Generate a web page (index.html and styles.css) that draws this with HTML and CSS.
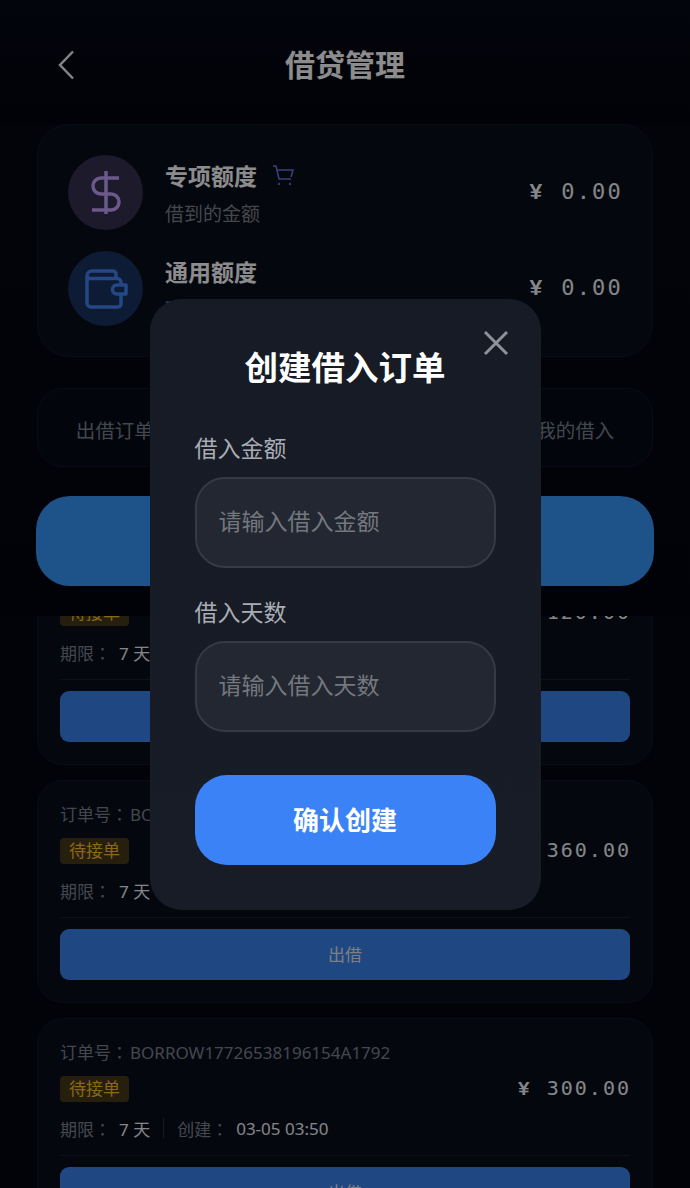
FILE: index.html

```html
<!DOCTYPE html>
<html>
<head>
    <meta charset="UTF-8">
    <meta name="viewport" content="width=device-width, initial-scale=1.0">
    <title>借贷管理</title>
    <link rel="stylesheet" href="styles.css">
</head>
<body>
    <div class="page">
        <div class="header">
            <svg class="back" width="18" height="30" viewBox="0 0 18 30"><path d="M16 1.5 3 15l13 13.5"/></svg>
            <h1>借贷管理</h1>
        </div>

        <div class="top">
            <div class="summary">
                <div class="quota">
                    <div class="quota-icon purple">
                        <svg width="50" height="50" viewBox="0 0 50 50"><path d="M25 3v43M38 10H20a8 8 0 0 0 0 16h10a8 8 0 0 1 0 16H11"/></svg>
                    </div>
                    <div class="quota-text">
                        <div class="quota-title">专项额度
                            <svg class="cart" width="22" height="22" viewBox="0 0 22 22"><path d="M1 2h3l3 13h12M5 6h16l-2 7"/><circle cx="7" cy="20" r=".8"/><circle cx="18" cy="20" r=".8"/></svg>
                        </div>
                        <div class="quota-sub">借到的金额</div>
                    </div>
                    <div class="quota-amount"><span class="yen">¥</span> 0.00</div>
                </div>
                <div class="quota">
                    <div class="quota-icon blue">
                        <svg width="50" height="50" viewBox="0 0 50 50"><path d="M6 12v27a4 4 0 0 0 4 4h27a3 3 0 0 0 3-3V30M6 12a5 5 0 0 1 5-5h21a3 3 0 0 1 3 3v4.500M6 12a3 3 0 0 0 3 2.500h27a4 4 0 0 1 4 4V21M45 21h-9a4.500 4.500 0 0 0 0 9h9z"/></svg>
                    </div>
                    <div class="quota-text">
                        <div class="quota-title">通用额度</div>
                        <div class="quota-sub">可用的金额</div>
                    </div>
                    <div class="quota-amount"><span class="yen">¥</span> 0.00</div>
                </div>
            </div>

            <div class="tabs">
                <div class="tab">出借订单</div>
                <div class="tab">借入订单</div>
                <div class="tab">我的出借</div>
                <div class="tab">我的借入</div>
            </div>

            <button class="create">创建借入订单</button>
        </div>

        <div class="list">
            <div class="order">
                <div class="order-main">
                    <div class="order-info">
                        <div class="order-no"><span class="no-label">订单号：</span>BORROW17726539204417B2260</div>
                        <span class="badge">待接单</span>
                        <div class="order-meta">
                            <span class="meta-label">期限：</span><span class="meta-value">7 天</span>
                            <span class="meta-sep"></span>
                            <span class="meta-label">创建：</span><span class="meta-value">03-05 04:10</span>
                        </div>
                    </div>
                    <div class="order-amount"><span class="yen">¥</span> 120.00</div>
                </div>
                <button class="lend">出借</button>
            </div>

            <div class="order">
                <div class="order-main">
                    <div class="order-info">
                        <div class="order-no"><span class="no-label">订单号：</span>BORROW17726538874409C3315</div>
                        <span class="badge">待接单</span>
                        <div class="order-meta">
                            <span class="meta-label">期限：</span><span class="meta-value">7 天</span>
                            <span class="meta-sep"></span>
                            <span class="meta-label">创建：</span><span class="meta-value">03-05 03:55</span>
                        </div>
                    </div>
                    <div class="order-amount"><span class="yen">¥</span> 360.00</div>
                </div>
                <button class="lend">出借</button>
            </div>

            <div class="order">
                <div class="order-main">
                    <div class="order-info">
                        <div class="order-no"><span class="no-label">订单号：</span>BORROW17726538196154A1792</div>
                        <span class="badge">待接单</span>
                        <div class="order-meta">
                            <span class="meta-label">期限：</span><span class="meta-value">7 天</span>
                            <span class="meta-sep"></span>
                            <span class="meta-label">创建：</span><span class="meta-value">03-05 03:50</span>
                        </div>
                    </div>
                    <div class="order-amount"><span class="yen">¥</span> 300.00</div>
                </div>
                <button class="lend">出借</button>
            </div>
        </div>
    </div>

    <div class="overlay">
        <div class="modal">
            <svg class="close" width="26" height="26" viewBox="0 0 26 26"><path d="M2 2l22 22M24 2 2 24"/></svg>
            <h2>创建借入订单</h2>
            <label class="field-label" for="amount">借入金额</label>
            <input class="field" id="amount" type="text" placeholder="请输入借入金额">
            <label class="field-label" for="days">借入天数</label>
            <input class="field" id="days" type="text" placeholder="请输入借入天数">
            <button class="confirm">确认创建</button>
        </div>
    </div>
</body>
</html>
```

FILE: styles.css

```css
* {
    box-sizing: border-box;
}

body {
    margin: 0;
    background: #040712;
    font-family: "Noto Sans", "Noto Sans CJK SC", sans-serif;
    overflow: hidden;
}

button {
    font-family: inherit;
    border: none;
}

.page {
    height: 1188px;
    display: flex;
    flex-direction: column;
    overflow: hidden;
}

/* header */
.header {
    height: 124px;
    flex: none;
    display: flex;
    align-items: center;
    justify-content: center;
    position: relative;
    padding-top: 2px;
    background: linear-gradient(#060a16, #03040e);
}

.header h1 {
    margin: 0;
    font-size: 30px;
    font-weight: 700;
    color: #fff;
}

.back {
    position: absolute;
    left: 57px;
    top: 50px;
}

.back path {
    fill: none;
    stroke: #f0f0f0;
    stroke-width: 2.500;
}

/* fixed part above the list */
.top {
    flex: none;
    height: 492px;
    padding: 0 36px;
    background: linear-gradient(#060912, #030410);
    position: relative;
    z-index: 1;
}

.summary {
    margin: 0 1px;
    height: 233px;
    padding: 30px;
    display: flex;
    flex-direction: column;
    gap: 21px;
    background: #090d1b;
    border: 1px solid #121725;
    border-radius: 32px;
}

.quota {
    display: flex;
    align-items: center;
    height: 75px;
}

.quota-icon {
    width: 75px;
    height: 75px;
    flex: none;
    border-radius: 50%;
    display: flex;
    align-items: center;
    justify-content: center;
}

.quota-icon path {
    fill: none;
    stroke-width: 3.500;
}

.quota-icon.purple {
    background: #363050;
}

.quota-icon.purple path {
    stroke: #c4a2ff;
}

.quota-icon.blue {
    background: #1a3260;
}

.quota-icon.blue path {
    stroke: #4383f5;
    stroke-linejoin: round;
}

.quota-text {
    flex: 1;
    margin-left: 22px;
    padding-top: 5px;
    align-self: flex-start;
}

.quota-title {
    display: flex;
    align-items: center;
    gap: 15px;
    height: 30px;
    font-size: 23px;
    font-weight: 700;
    color: #fff;
}

.cart path {
    fill: none;
    stroke: #7472e0;
    stroke-width: 1.500;
}

.cart circle {
    fill: #7472e0;
    stroke: #7472e0;
}

.quota-sub {
    margin-top: 10px;
    font-size: 19px;
    line-height: 28px;
    color: #7e828c;
}

.quota-amount {
    margin-right: -1px;
    font-family: "DejaVu Sans Mono", monospace;
    font-size: 22px;
    letter-spacing: .1em;
    color: #f2f4f8;
}

.yen {
    font-family: "Liberation Mono", monospace;
    font-weight: 700;
    margin-right: 1px;
}

.tabs {
    margin: 31px 1px 0;
    height: 79px;
    padding-top: 3px;
    display: grid;
    grid-template-columns: repeat(4, 1fr);
    align-items: center;
    border: 1px solid #121725;
    border-radius: 26px;
    background: #070a16;
}

.tab {
    text-align: center;
    font-size: 19.500px;
    color: #7a818e;
}

.create {
    display: block;
    width: 100%;
    height: 90px;
    margin-top: 29px;
    border-radius: 34px;
    background: #3897fa;
    color: #fff;
    font-size: 26px;
    font-weight: 700;
}

/* order list, scrolled a bit so the first card runs under .top */
.list {
    flex: 1;
    min-height: 0;
    overflow: hidden;
    padding: 0 37px;
    display: flex;
    flex-direction: column;
    gap: 15px;
}

.order {
    flex: none;
    height: 223px;
    padding: 23px 22px 22px;
    background: #090d1b;
    border: 1px solid #121725;
    border-radius: 26px;
}

.order:first-child {
    margin-top: -74px;
}

.order-main {
    display: flex;
    align-items: center;
    justify-content: space-between;
    height: 114px;
    padding-bottom: 15px;
    border-bottom: 1px solid #1a2030;
}

/* TC font: its full-width colon sits in the middle of the cell */
.order-no {
    font-family: "Noto Sans", "Noto Sans CJK TC", sans-serif;
    font-size: 17px;
    line-height: 22px;
    color: #7d838f;
    white-space: nowrap;
}

.no-label {
    margin-right: 2px;
}

.badge {
    display: inline-block;
    height: 26px;
    margin-top: 12px;
    padding: 0 9px;
    border-radius: 4px;
    background: #46391a;
    color: #fbbf24;
    font-size: 17px;
    line-height: 25px;
}

.order-meta {
    display: flex;
    align-items: center;
    height: 24px;
    margin-top: 14px;
    font-size: 17px;
}

.meta-label {
    font-family: "Noto Sans", "Noto Sans CJK TC", sans-serif;
    color: #7d838f;
    margin-right: 8px;
}

.meta-value {
    color: #eef2f8;
}

.meta-sep {
    width: 1px;
    height: 20px;
    margin: 0 13px;
    background: #2a3040;
}

.order-amount {
    flex: none;
    margin-bottom: 6px;
    margin-right: -1px;
    font-family: "DejaVu Sans Mono", monospace;
    font-size: 20px;
    letter-spacing: .1em;
    color: #f2f4f8;
}

.lend {
    display: block;
    width: 100%;
    height: 51px;
    margin-top: 11px;
    padding-bottom: 3px;
    border-radius: 9px;
    background: #3a82ec;
    color: #dfe6f2;
    font-size: 17px;
}

/* dialog */
.overlay {
    position: fixed;
    inset: 0;
    z-index: 10;
    background: rgba(0, 0, 0, .45);
    display: flex;
    justify-content: center;
    padding-top: 299px;
}

.modal {
    position: relative;
    width: 391px;
    height: 611px;
    padding: 45px;
    background: linear-gradient(#161b26, #171c26);
    border-radius: 32px;
    display: flex;
    flex-direction: column;
}

.close {
    position: absolute;
    top: 31px;
    right: 32px;
}

.close path {
    fill: none;
    stroke: #8f9298;
    stroke-width: 3;
}

.modal h2 {
    margin: 0;
    height: 46px;
    line-height: 46px;
    text-align: center;
    font-size: 33.500px;
    font-weight: 700;
    color: #fff;
}

.field-label {
    margin-top: 29px;
    font-size: 23px;
    line-height: 30px;
    color: #a9adb4;
}

.modal h2 + .field-label {
    margin-top: 43px;
}

.field-label + .field {
    margin-top: 14px;
}

.field {
    display: block;
    width: 100%;
    height: 91px;
    flex: none;
    padding: 0 22px 3px;
    border: 2px solid #353a45;
    border-radius: 30px;
    background: #222731;
    font-family: inherit;
    font-size: 23px;
    color: #fff;
    outline: none;
}

.field::placeholder {
    color: #74787e;
    opacity: 1;
}

.confirm {
    height: 90px;
    flex: none;
    margin-top: 43px;
    padding-bottom: 3px;
    border-radius: 32px;
    background: #3b82f6;
    color: #fff;
    font-size: 26px;
    font-weight: 700;
}
```
